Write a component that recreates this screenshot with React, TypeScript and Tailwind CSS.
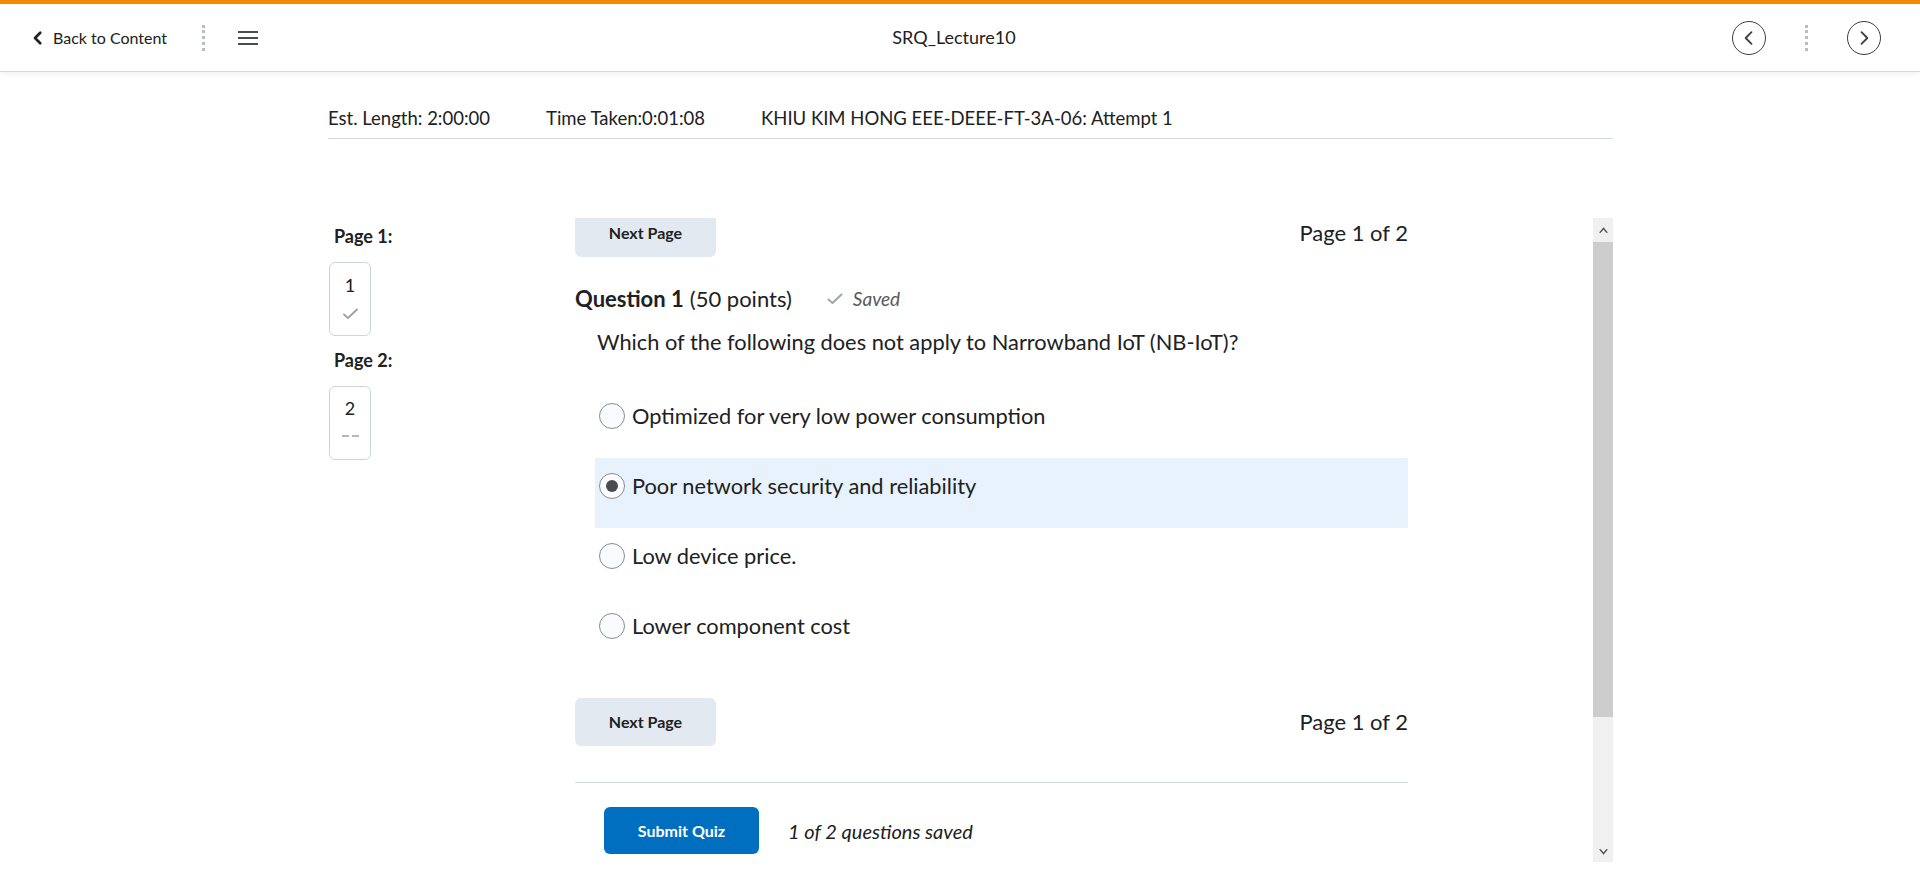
import React from 'react';

const ChevronLeft = ({ className }: { className?: string }) => (
  <svg viewBox="0 0 24 24" className={className} fill="none" stroke="currentColor" strokeLinecap="round" strokeLinejoin="round">
    <polyline points="15 5 8 12 15 19" />
  </svg>
);

const ChevronRight = ({ className }: { className?: string }) => (
  <svg viewBox="0 0 24 24" className={className} fill="none" stroke="currentColor" strokeLinecap="round" strokeLinejoin="round">
    <polyline points="9 5 16 12 9 19" />
  </svg>
);

const Check = ({ className }: { className?: string }) => (
  <svg viewBox="0 0 16 12" className={className} fill="none" stroke="currentColor" strokeWidth="2" strokeLinecap="round" strokeLinejoin="round">
    <polyline points="1.5 6.5 5.5 10 14.5 1.5" />
  </svg>
);

const options = [
  { label: 'Optimized for very low power consumption', checked: false },
  { label: 'Poor network security and reliability', checked: true },
  { label: 'Low device price.', checked: false },
  { label: 'Lower component cost', checked: false },
];

const Radio = ({ checked }: { checked: boolean }) => (
  <span className="flex h-[26px] w-[26px] shrink-0 items-center justify-center rounded-full border border-[#868c8f] bg-[#f9fbff]">
    {checked && <span className="h-[12px] w-[12px] rounded-full bg-[#494c4e]" />}
  </span>
);

const NavRow = () => (
  <div className="flex h-[48px] items-center justify-between">
    <button className="h-[48px] w-[141px] rounded-[6px] bg-[#e3e9f1] text-[16px] font-bold text-[#202122]">
      Next Page
    </button>
    <span className="text-[22px] leading-[28px] text-[#202122]">Page 1 of 2</span>
  </div>
);

export default function App() {
  return (
    <div className="min-h-screen bg-white font-['Lato','Open_Sans',sans-serif] text-[#202122]">
      {/* Top navbar */}
      <header className="border-t-4 border-[#f18a00] border-b border-b-[#d3d9e3] shadow-[0_2px_6px_rgba(0,0,0,0.06)]">
        <div className="grid h-[67px] grid-cols-[1fr_auto_1fr] items-center">
          <div className="flex items-center pl-[29px]">
            <ChevronLeft className="h-[18px] w-[18px] stroke-[3.6] text-[#202122]" />
            <span className="ml-[6px] text-[16px] text-[#202122]">Back to Content</span>
            <span className="ml-[35px] h-[26px] border-l-[3px] border-dotted border-[#b7bcc1]" />
            <span className="ml-[33px] flex w-[20px] flex-col gap-[4px]">
              <span className="h-[2px] bg-[#494c4e]" />
              <span className="h-[2px] bg-[#494c4e]" />
              <span className="h-[2px] bg-[#494c4e]" />
            </span>
          </div>
          <div className="pr-[12px] text-[18px] text-[#202122]">SRQ_Lecture10</div>
          <div className="flex items-center justify-end pr-[39px]">
            <span className="flex h-[34px] w-[34px] items-center justify-center rounded-full border-[1.5px] border-[#3b3d3f]">
              <ChevronLeft className="h-[20px] w-[20px] stroke-[2.2] text-[#3b3d3f]" />
            </span>
            <span className="mx-[39px] h-[26px] border-l-[3px] border-dotted border-[#b7bcc1]" />
            <span className="flex h-[34px] w-[34px] items-center justify-center rounded-full border-[1.5px] border-[#3b3d3f]">
              <ChevronRight className="h-[20px] w-[20px] stroke-[2.2] text-[#3b3d3f]" />
            </span>
          </div>
        </div>
      </header>

      <div className="ml-[328px] w-[1285px]">
        {/* Attempt info */}
        <div className="mt-[32px] flex gap-[56px] border-b border-[#d3d9e3] pb-[6px] text-[18.5px] leading-[28px]">
          <span>Est. Length: 2:00:00</span>
          <span>Time Taken:0:01:08</span>
          <span>KHIU KIM HONG EEE-DEEE-FT-3A-06: Attempt 1</span>
        </div>

        {/* Quiz frame */}
        <div className="mt-[79px] flex h-[644px]">
          <div className="flex flex-1 overflow-hidden">
            {/* Page list */}
            <aside className="w-[247px] pt-[6px]">
              <div className="pl-[6px] text-[18px] font-bold leading-[24px]">Page 1:</div>
              <div className="ml-px mt-[14px] flex h-[74px] w-[42px] flex-col items-center rounded-[6px] border border-[#cdd5dc] pt-[10px]">
                <span className="text-[18px] leading-[24px]">1</span>
                <Check className="mt-[11px] h-[12px] w-[17px] text-[#a0a5a8]" />
              </div>
              <div className="mt-[12px] pl-[6px] text-[18px] font-bold leading-[24px]">Page 2:</div>
              <div className="ml-px mt-[14px] flex h-[74px] w-[42px] flex-col items-center rounded-[6px] border border-[#cdd5dc] pt-[9px]">
                <span className="text-[18px] leading-[24px]">2</span>
                <span className="mt-[15px] flex gap-[3px]">
                  <span className="h-[2px] w-[7px] bg-[#b4b9bd]" />
                  <span className="h-[2px] w-[7px] bg-[#b4b9bd]" />
                </span>
              </div>
            </aside>

            {/* Questions */}
            <main className="-mt-[9px] w-[833px]">
              <NavRow />

              <div className="mt-[28px] flex h-[28px] items-center">
                <span className="text-[22px] font-bold leading-[28px]">Question 1</span>
                <span className="ml-[6px] text-[22px] leading-[28px]">(50 points)</span>
                <span className="ml-[35px] flex items-center text-[19px] italic leading-[28px] text-[#565a5c]">
                  <Check className="mr-[10px] h-[12px] w-[16px] text-[#a0a5a8]" />
                  Saved
                </span>
              </div>

              <p className="mt-[15px] h-[28px] pl-[22px] text-[21.8px] leading-[28px]">
                Which of the following does not apply to Narrowband IoT (NB-IoT)?
              </p>

              <div className="ml-[20px] mt-[32px]">
                {options.map((o) => (
                  <label
                    key={o.label}
                    className={`flex h-[70px] items-start pl-[4px] pt-[14px] ${o.checked ? 'bg-[#e8f2fc]' : ''}`}
                  >
                    <span className="flex h-[28px] items-center">
                      <Radio checked={o.checked} />
                    </span>
                    <span className="ml-[7px] text-[21.8px] leading-[28px]">{o.label}</span>
                  </label>
                ))}
              </div>

              <div className="mt-[30px]">
                <NavRow />
              </div>

              <div className="mt-[36px] border-t border-[#d3d9e3] pl-[29px] pt-[24px]">
                <div className="flex items-center">
                  <button className="h-[47px] w-[155px] rounded-[6px] bg-[#006fbf] text-[16px] font-bold text-white">
                    Submit Quiz
                  </button>
                  <span className="ml-[29px] text-[20px] italic">1 of 2 questions saved</span>
                </div>
              </div>
            </main>
          </div>

          {/* Scrollbar */}
          <div className="flex w-[20px] flex-col bg-[#f0f0f0]">
            <div className="flex h-[24px] items-center justify-center">
              <svg viewBox="0 0 10 6" className="h-[6px] w-[9px]">
                <path d="M0 6 L5 0 L10 6 L8 6 L5 2.5 L2 6 Z" fill="#505050" />
              </svg>
            </div>
            <div className="h-[475px] bg-[#cdcdcd]" />
            <div className="flex flex-1 items-end justify-center pb-[7px]">
              <svg viewBox="0 0 10 6" className="h-[6px] w-[9px]">
                <path d="M0 0 L5 6 L10 0 L8 0 L5 3.5 L2 0 Z" fill="#505050" />
              </svg>
            </div>
          </div>
        </div>
      </div>
    </div>
  );
}
